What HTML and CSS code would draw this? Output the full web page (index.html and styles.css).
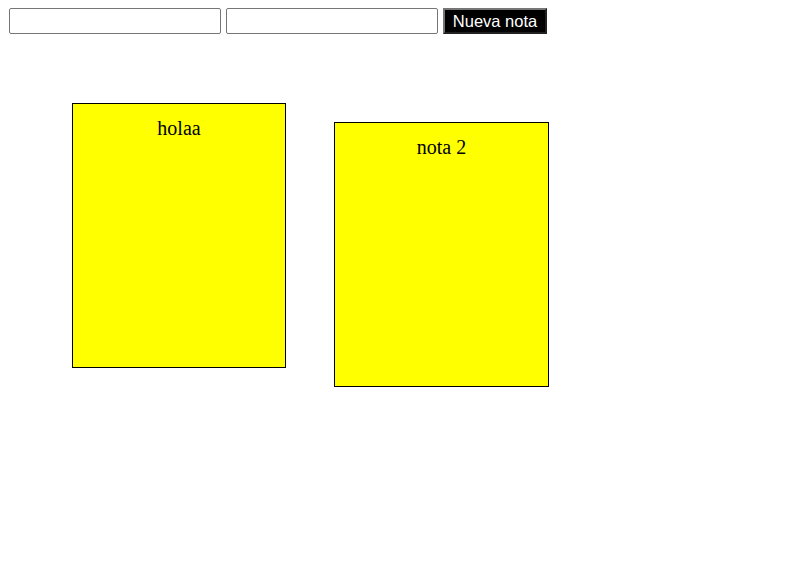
FILE: index.html
```html
<!DOCTYPE html>
<html lang="es">
<head>
<meta charset="utf-8">
<title>Notas</title>
<link rel="stylesheet" href="styles.css">
</head>
<body>
<div class="toolbar">
  <input class="field" type="text">
  <input class="field" type="text">
  <button class="add">Nueva nota</button>
</div>
<div class="board">
  <div class="note note-a">holaa</div>
  <div class="note note-b">nota 2</div>
</div>
</body>
</html>
```
FILE: styles.css
```css
html, body {
  margin: 0;
  padding: 0;
  background: #fff;
}
body {
  margin: 8px;
  font-family: "Liberation Serif", "Times New Roman", serif;
}
.toolbar {
  display: flex;
  gap: 5px;
  margin-left: 1px;
  height: 26px;
}
.field {
  box-sizing: border-box;
  width: 212px;
  height: 26px;
  margin: 0;
  border: 1px solid #767676;
  border-radius: 2px;
  padding: 1px 2px;
  font: 16px "Liberation Sans", Arial, sans-serif;
  background: #fff;
}
.add {
  box-sizing: border-box;
  width: 104px;
  height: 26px;
  margin: 0;
  padding: 0 4px;
  background: #000;
  color: #fff;
  border: 2px outset #767676;
  font: 16.5px "Liberation Sans", Arial, sans-serif;
}
.board {
  position: relative;
  height: 400px;
}
.note {
  position: absolute;
  box-sizing: border-box;
  width: 214px;
  height: 265px;
  background: #ffff00;
  border: 1px solid #000;
  padding-top: 13px;
  text-align: center;
  font-size: 20px;
  line-height: 23px;
  color: #000;
}
.note-a {
  left: 64px;
  top: 69px;
}
.note-b {
  left: 326px;
  top: 88px;
  width: 215px;
}
```
